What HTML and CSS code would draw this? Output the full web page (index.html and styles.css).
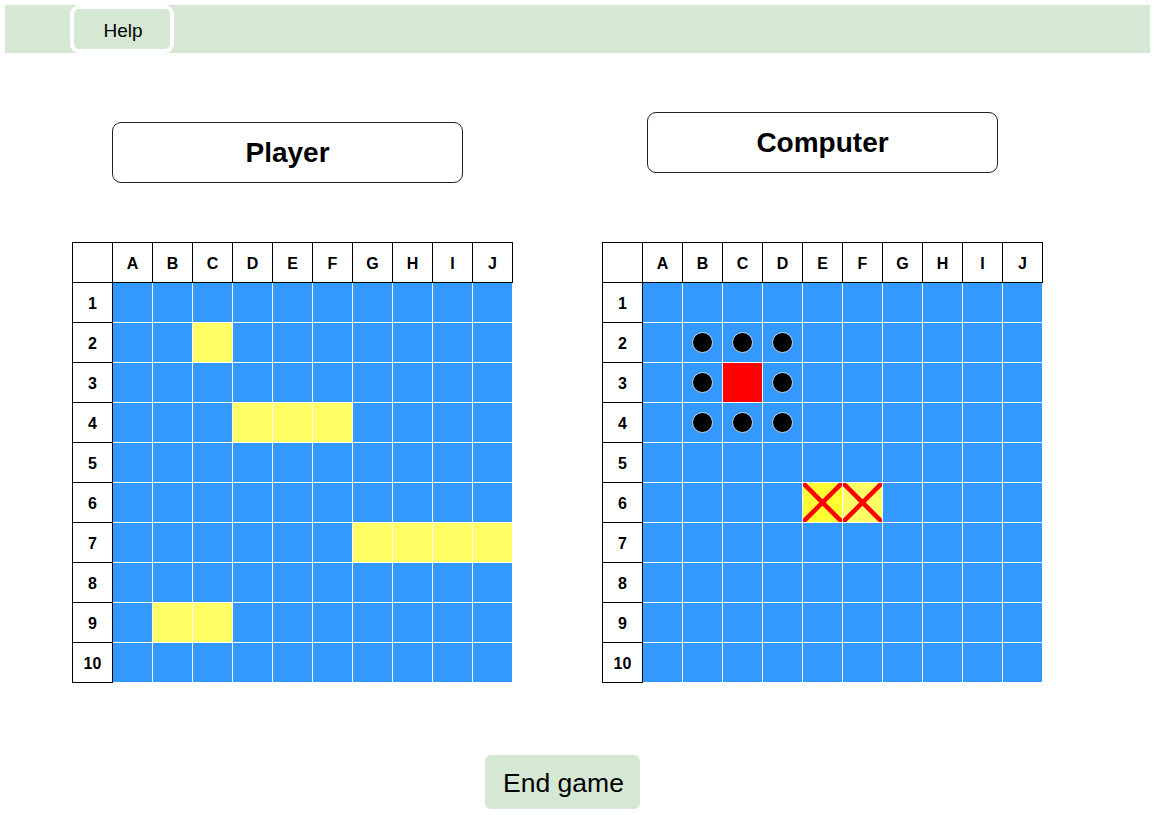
FILE: index.html
```html
<!DOCTYPE html>
<html>
<head>
<meta charset="utf-8">
<title>Battleship</title>
<link rel="stylesheet" href="styles.css">
</head>
<body>
<div class="topbar"><button class="help">Help</button></div>
<div class="boards">
  <section class="panel panel-player">
    <div class="label">Player</div>
    <table class="grid">
      <tr><th></th><th>A</th><th>B</th><th>C</th><th>D</th><th>E</th><th>F</th><th>G</th><th>H</th><th>I</th><th>J</th></tr>
      <tr><th>1</th><td></td><td></td><td></td><td></td><td></td><td></td><td></td><td></td><td></td><td></td></tr>
      <tr><th>2</th><td></td><td></td><td class="ship"></td><td></td><td></td><td></td><td></td><td></td><td></td><td></td></tr>
      <tr><th>3</th><td></td><td></td><td></td><td></td><td></td><td></td><td></td><td></td><td></td><td></td></tr>
      <tr><th>4</th><td></td><td></td><td></td><td class="ship"></td><td class="ship"></td><td class="ship"></td><td></td><td></td><td></td><td></td></tr>
      <tr><th>5</th><td></td><td></td><td></td><td></td><td></td><td></td><td></td><td></td><td></td><td></td></tr>
      <tr><th>6</th><td></td><td></td><td></td><td></td><td></td><td></td><td></td><td></td><td></td><td></td></tr>
      <tr><th>7</th><td></td><td></td><td></td><td></td><td></td><td></td><td class="ship"></td><td class="ship"></td><td class="ship"></td><td class="ship"></td></tr>
      <tr><th>8</th><td></td><td></td><td></td><td></td><td></td><td></td><td></td><td></td><td></td><td></td></tr>
      <tr><th>9</th><td></td><td class="ship"></td><td class="ship"></td><td></td><td></td><td></td><td></td><td></td><td></td><td></td></tr>
      <tr><th>10</th><td></td><td></td><td></td><td></td><td></td><td></td><td></td><td></td><td></td><td></td></tr>
    </table>
  </section>
  <section class="panel panel-computer">
    <div class="label">Computer</div>
    <table class="grid">
      <tr><th></th><th>A</th><th>B</th><th>C</th><th>D</th><th>E</th><th>F</th><th>G</th><th>H</th><th>I</th><th>J</th></tr>
      <tr><th>1</th><td></td><td></td><td></td><td></td><td></td><td></td><td></td><td></td><td></td><td></td></tr>
      <tr><th>2</th><td></td><td><span class="dot"></span></td><td><span class="dot"></span></td><td><span class="dot"></span></td><td></td><td></td><td></td><td></td><td></td><td></td></tr>
      <tr><th>3</th><td></td><td><span class="dot"></span></td><td class="hit"></td><td><span class="dot"></span></td><td></td><td></td><td></td><td></td><td></td><td></td></tr>
      <tr><th>4</th><td></td><td><span class="dot"></span></td><td><span class="dot"></span></td><td><span class="dot"></span></td><td></td><td></td><td></td><td></td><td></td><td></td></tr>
      <tr><th>5</th><td></td><td></td><td></td><td></td><td></td><td></td><td></td><td></td><td></td><td></td></tr>
      <tr><th>6</th><td></td><td></td><td></td><td></td><td class="sunk"><svg class="cross" viewBox="0 0 39 39"><line x1="1.5" y1="1.5" x2="37.5" y2="37.5"/><line x1="37.5" y1="1.5" x2="1.5" y2="37.5"/></svg></td><td class="sunk sunk-light"><svg class="cross" viewBox="0 0 39 39"><line x1="1.5" y1="1.5" x2="37.5" y2="37.5"/><line x1="37.5" y1="1.5" x2="1.5" y2="37.5"/></svg></td><td></td><td></td><td></td><td></td></tr>
      <tr><th>7</th><td></td><td></td><td></td><td></td><td></td><td></td><td></td><td></td><td></td><td></td></tr>
      <tr><th>8</th><td></td><td></td><td></td><td></td><td></td><td></td><td></td><td></td><td></td><td></td></tr>
      <tr><th>9</th><td></td><td></td><td></td><td></td><td></td><td></td><td></td><td></td><td></td><td></td></tr>
      <tr><th>10</th><td></td><td></td><td></td><td></td><td></td><td></td><td></td><td></td><td></td><td></td></tr>
    </table>
  </section>
</div>
<div class="footer"><button class="end">End game</button></div>
</body>
</html>
```
FILE: styles.css
```css
html, body {
  margin: 0;
  padding: 0;
  background: #fff;
  font-family: "Liberation Sans", Arial, sans-serif;
  color: #000;
}

.topbar {
  margin: 5px 5px 0 5px;
  height: 48px;
  background: #d5e8d4;
  display: flex;
  align-items: stretch;
  padding-left: 65px;
}

.help {
  box-sizing: border-box;
  width: 104px;
  height: 48px;
  border: 4px solid #fff;
  border-radius: 9px;
  background: #d5e8d4;
  font-family: "Liberation Sans", Arial, sans-serif;
  font-size: 19px;
  color: #000;
  padding: 3px 0 0 2px;
  margin: 0;
}

.boards {
  display: flex;
  align-items: flex-start;
  gap: 89px;
  padding-left: 72px;
}

.panel {
  display: flex;
  flex-direction: column;
  align-items: flex-start;
}

.label {
  box-sizing: border-box;
  width: 351px;
  height: 61px;
  border: 1px solid #222;
  border-radius: 9px;
  display: flex;
  align-items: center;
  justify-content: center;
  font-weight: bold;
  font-size: 28px;
  padding-top: 1px;
}

.panel-player .label { margin: 69px 0 0 40px; }
.panel-player .grid { margin-top: 59px; }
.panel-computer .label { margin: 59px 0 0 45px; }
.panel-computer .grid { margin-top: 69px; }

.grid {
  border-collapse: collapse;
  border-spacing: 0;
}

.grid th,
.grid td {
  width: 39px;
  height: 39px;
  padding: 0;
  text-align: center;
  vertical-align: middle;
}

.grid th {
  border: 1px solid #000;
  background: #fff;
  font-weight: bold;
  font-size: 16px;
  height: 37px;
  padding-top: 2px;
}

.grid td {
  border: 1px solid #fff;
  background: #3399ff;
}

.grid td.ship { background: #ffff66; }
.grid td.hit { background: #ff0000; }
.grid td.sunk { background: #ffff33; }
.grid td.sunk-light { background: #ffff66; }

.dot {
  display: block;
  box-sizing: border-box;
  width: 21px;
  height: 21px;
  margin: 0 auto;
  border-radius: 50%;
  background: #000;
  border: 1px solid #c8d8e8;
}

.cross {
  display: block;
  width: 39px;
  height: 39px;
}

.cross line {
  stroke: #ff0000;
  stroke-width: 4.5;
  stroke-linecap: round;
}

.footer {
  padding-left: 485px;
  margin-top: 72px;
}

.end {
  box-sizing: border-box;
  width: 155px;
  height: 54px;
  border: none;
  border-radius: 6px;
  background: #d5e8d4;
  font-family: "Liberation Sans", Arial, sans-serif;
  font-size: 26.5px;
  color: #000;
  padding: 2px 0 0 2px;
  margin: 0;
}
```
